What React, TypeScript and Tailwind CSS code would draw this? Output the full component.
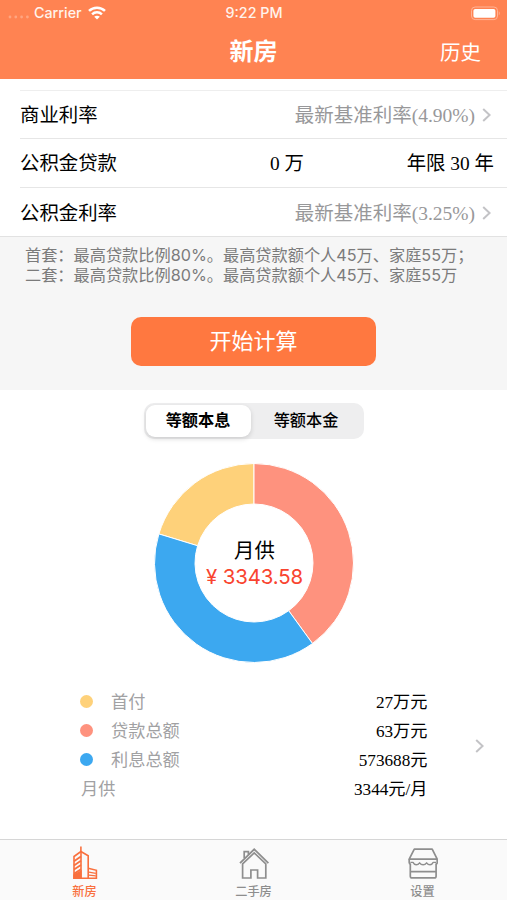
import { useState } from "react";
import type { ReactNode } from "react";
import { clsx } from "clsx";

type Slice = { label: string; value: string; color: string; from: number; to: number };

const SLICES: Slice[] = [
  { label: "首付", value: "27万元", color: "#fed17a", from: 287, to: 360 },
  { label: "贷款总额", value: "63万元", color: "#fe927e", from: 0, to: 144 },
  { label: "利息总额", value: "573688元", color: "#3ca8f0", from: 144, to: 287 },
];

const MODES = ["等额本息", "等额本金"];

const CX = 100;
const CY = 100;
const R_OUT = 99.5;
const R_IN = 59;

function pointAt(angle: number, r: number) {
  const rad = ((angle - 90) * Math.PI) / 180;
  return `${(CX + r * Math.cos(rad)).toFixed(2)} ${(CY + r * Math.sin(rad)).toFixed(2)}`;
}

function arcPath(from: number, to: number) {
  const large = to - from > 180 ? 1 : 0;
  return (
    `M ${pointAt(from, R_OUT)} A ${R_OUT} ${R_OUT} 0 ${large} 1 ${pointAt(to, R_OUT)} ` +
    `L ${pointAt(to, R_IN)} A ${R_IN} ${R_IN} 0 ${large} 0 ${pointAt(from, R_IN)} Z`
  );
}

function Chevron({ className }: { className?: string }) {
  return (
    <svg viewBox="0 0 9 14" className={clsx("h-[14px] w-[9px] shrink-0", className)} fill="none" stroke="#c3c3c6" strokeWidth="2">
      <path d="M1.2 1 L7.6 7 L1.2 13" />
    </svg>
  );
}

function StatusBar() {
  return (
    <div className="grid h-[26px] grid-cols-3 items-center pr-[7px] pl-[8px] font-['Inter','Liberation_Sans',sans-serif] text-[14px] font-medium text-[#fff3ec]">
      <div className="flex items-center">
        <svg viewBox="0 0 22 4" className="mt-2 h-[4px] w-[22px]" fill="#ffa580">
          <circle cx="2" cy="2" r="1.4" />
          <circle cx="7.8" cy="2" r="1.4" />
          <circle cx="13.6" cy="2" r="1.4" />
          <circle cx="19.4" cy="2" r="1.4" />
        </svg>
        <span className="ml-1 text-[14.3px]">Carrier</span>
        <svg viewBox="0 0 18 14" className="ml-[6px] h-[14px] w-[18px]" fill="none" stroke="#fff" strokeWidth="2.5">
          <path d="M1 4.9 C5.4 0.6 12.6 0.6 17 4.9" />
          <path d="M4.1 8.3 C6.8 5.7 11.2 5.7 13.9 8.3" />
          <path d="M9 13.6 L6.2 10.7 C7.8 9.3 10.2 9.3 11.8 10.7 Z" fill="#fff" stroke="none" />
        </svg>
      </div>
      <div className="text-center text-[14.3px]">9:22 PM</div>
      <svg viewBox="0 0 30 15" className="h-[15px] w-[30px] justify-self-end">
        <rect x="1.5" y="1" width="26" height="12.6" rx="3.6" fill="none" stroke="#ffb497" />
        <rect x="3.4" y="3" width="22" height="8.8" rx="1.8" fill="#fff" />
        <path d="M28.8 5.3 C30 6 30 8.6 28.8 9.3 Z" fill="#ffb497" />
      </svg>
    </div>
  );
}

function Row({ label, last, children }: { label: string; last?: boolean; children: ReactNode }) {
  return (
    <div className={clsx("flex items-center pt-[2px]", last ? "h-[48.4px] pl-5" : "ml-5 h-[48.8px] border-b border-[#e6e6e6]")}>
      <span className="w-[100px] whitespace-nowrap">{label}</span>
      {children}
    </div>
  );
}

function RateValue({ text }: { text: string }) {
  return (
    <div className="ml-auto flex items-center pr-[16px] text-[#98989a]">
      <span className="text-[19.5px] whitespace-nowrap">{text}</span>
      <Chevron className="ml-[7px]" />
    </div>
  );
}

function TowerIcon() {
  return (
    <svg viewBox="0 0 26 34" className="h-[34px] w-[26px]" fill="none" stroke="#f9703e" strokeWidth="1.6">
      <path d="M8.9 0.5 V6" />
      <path d="M2 10.5 L8.9 5.5 L16.2 9.8 V32.3 H2 Z" />
      <path d="M9 5.5 V32" />
      <path d="M2 15.2 L8.9 10.6 M2 19.4 L8.9 14.8 M2 23.6 L8.9 19 M2 27.8 L8.9 23.2" strokeWidth="1.8" />
      <path d="M2 29 L8.9 25.4 V32.3 H2 Z" fill="#f9703e" />
      <path d="M16.2 22.2 L24.4 24.3 V32.3 H16" />
      <path d="M17 26.2 L23.8 27.4 M17 29.2 L23.8 29.8" strokeWidth="1.2" />
    </svg>
  );
}

function HouseIcon() {
  return (
    <svg viewBox="0 0 30 34" className="h-[34px] w-[30px]" fill="none" stroke="#8e8e8e" strokeWidth="1.7">
      <path d="M1 17.2 L15.2 3.3 L29.4 17.2" strokeWidth="1.8" />
      <path d="M3.6 17.8 V32 H11.9 V24 H18.6 V32 H26.8 V17.8 L15.2 6.8 Z" />
      <path d="M5.2 12 V5.6 H9.4 V8.4" />
    </svg>
  );
}

function ShopIcon() {
  return (
    <svg viewBox="0 0 30 34" className="h-[34px] w-[30px]" fill="none" stroke="#8e8e8e" strokeWidth="1.7" strokeLinejoin="round">
      <path d="M6.3 3.2 H24.2 L29.2 13.2 H1.2 Z" />
      <path d="M1.2 13.2 V16.6 Q1.2 18 2.6 18 M29.2 13.2 V16.6 Q29.2 18 27.8 18" />
      <path d="M2.4 16.4 H5 Q6.2 18.8 8.2 18.8 Q10.2 18.8 11.6 16.8 Q13 18.8 15.1 18.8 Q17.2 18.8 18.6 16.8 Q20 18.8 22 18.8 Q24 18.8 25.2 16.4 H28" strokeWidth="1.4" />
      <path d="M2.3 17.6 V30.2 Q2.3 31.9 4.2 31.9 H26.2 Q28.1 31.9 28.1 30.2 V17.6 M2.3 25.7 H28.1" />
    </svg>
  );
}

const TABS = [
  { label: "新房", icon: <TowerIcon />, active: true },
  { label: "二手房", icon: <HouseIcon />, active: false },
  { label: "设置", icon: <ShopIcon />, active: false },
];

export default function App() {
  const [mode, setMode] = useState(0);

  return (
    <div className="flex h-[900px] w-[507px] flex-col overflow-hidden bg-white font-['Liberation_Serif','Noto_Sans_CJK_SC',serif] text-black">
      <header className="h-[79px] shrink-0 bg-[#ff8352] text-white">
        <StatusBar />
        <div className="grid h-[51px] grid-cols-3 items-center pr-[26px] pl-[26px]">
          <span />
          <h1 className="text-center text-[24px] font-bold">新房</h1>
          <span className="pt-[3px] text-right text-[20.5px]">历史</span>
        </div>
      </header>

      <section className="h-[157px] shrink-0 text-[19.4px] leading-none">
        <div className="ml-5 h-[11.5px] border-b border-[#eeeeee]" />
        <Row label="商业利率">
          <RateValue text="最新基准利率(4.90%)" />
        </Row>
        <Row label="公积金贷款">
          <span className="ml-[150px]">0 万</span>
          <span className="ml-auto pr-[13px]">年限 30 年</span>
        </Row>
        <Row label="公积金利率" last>
          <RateValue text="最新基准利率(3.25%)" />
        </Row>
      </section>

      <section className="h-[154px] shrink-0 border-t border-[#e2e2e2] bg-[#f6f6f6]">
        <div className="pt-[9px] pl-[25px] font-['Inter','Noto_Sans_CJK_SC',sans-serif] text-[16.2px] leading-[19.5px] whitespace-nowrap text-[#7b7b7b]">
          <p>首套：最高贷款比例80%。最高贷款额个人45万、家庭55万；</p>
          <p>二套：最高贷款比例80%。最高贷款额个人45万、家庭55万</p>
        </div>
        <button className="mx-auto mt-[32px] flex h-[49px] w-[245px] items-center justify-center rounded-[10px] bg-[#ff7840] text-[22px] text-white">
          开始计算
        </button>
      </section>

      <section className="flex grow flex-col">
        <div className="mx-auto mt-[13px] flex h-[36px] w-[220px] rounded-[10px] bg-[#eeeeef] p-[2px] text-[16.2px]">
          {MODES.map((m, i) => (
            <button
              key={m}
              onClick={() => setMode(i)}
              className={clsx(
                "rounded-[9px] pt-[1px] whitespace-nowrap",
                mode === i ? "w-[105px] bg-white font-bold shadow-[0_2px_5px_rgba(0,0,0,0.14)]" : "grow font-medium"
              )}
            >
              {m}
            </button>
          ))}
        </div>

        <div className="mx-auto mt-[23.5px] grid h-[200px] w-[200px] place-items-center">
          <svg viewBox="0 0 200 200" className="col-start-1 row-start-1 h-[200px] w-[200px]">
            {SLICES.map((s) => (
              <path key={s.label} d={arcPath(s.from, s.to)} fill={s.color} stroke="#fff" strokeWidth="1" />
            ))}
          </svg>
          <div className="col-start-1 row-start-1 pt-[3px] pl-[2px] text-center">
            <div className="text-[20.4px] leading-[25px]">月供</div>
            <div className="font-['Inter','Noto_Sans_CJK_SC',sans-serif] text-[20.4px] leading-[25px] tracking-[-0.1px] text-[#f9442f]">¥ 3343.58</div>
          </div>
        </div>

        <div className="mt-[24px] flex items-center pr-[23px] pl-[80px] text-[17.2px] leading-[29.3px]">
          <div className="w-[347.5px]">
            {SLICES.map((s) => (
              <div key={s.label} className="flex items-center">
                <span className="h-[13px] w-[13px] rounded-full" style={{ backgroundColor: s.color }} />
                <span className="ml-[18px] pt-[2px] leading-[27.3px] text-[#a1a1a3]">{s.label}</span>
                <span className="ml-auto pt-[2px] leading-[27.3px]">{s.value}</span>
              </div>
            ))}
            <div className="flex items-center pt-[1px]">
              <span className="ml-[1px] text-[#a1a1a3]">月供</span>
              <span className="ml-auto">3344元/月</span>
            </div>
          </div>
          <Chevron className="ml-auto" />
        </div>
      </section>

      <nav className="grid h-[61px] shrink-0 grid-cols-3 border-t border-[#d6d6d6] bg-[#fafafa]">
        {TABS.map((t) => (
          <div key={t.label} className={clsx("flex flex-col items-center pt-[6px]", t.active ? "text-[#f9703e]" : "text-[#8e8e8e]")}>
            {t.icon}
            <span className="mt-[5px] text-[12.2px] leading-[14px] font-medium">{t.label}</span>
          </div>
        ))}
      </nav>
    </div>
  );
}
